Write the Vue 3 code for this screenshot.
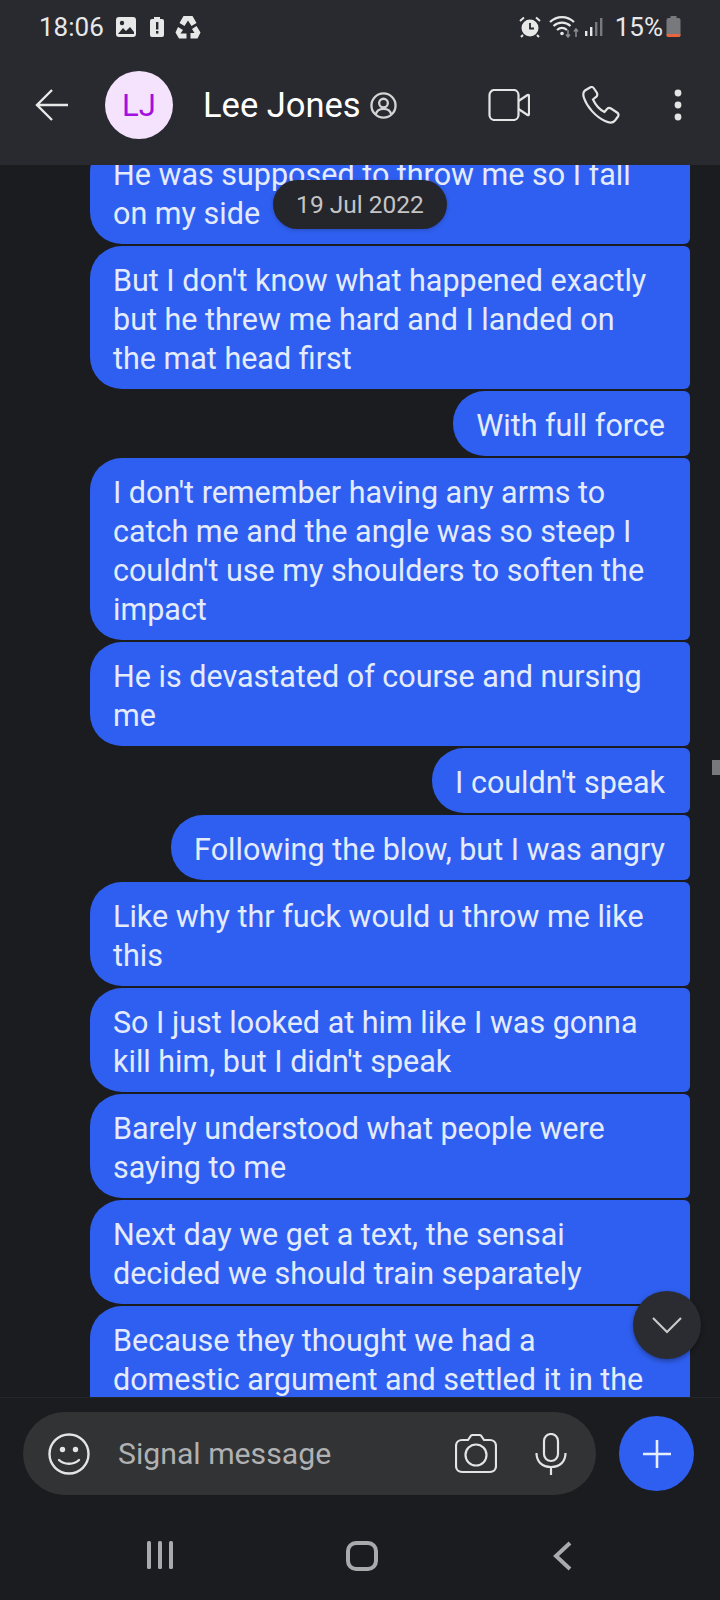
<script setup>
const messages = [
  'He was supposed to throw me so I fall on my side',
  "But I don't know what happened exactly but he threw me hard and I landed on the\u00a0mat head first",
  'With full force',
  "I don't remember having any arms to catch me and the angle was so steep I couldn't use my shoulders to soften the impact",
  'He is devastated of course and nursing me',
  "I couldn't speak",
  'Following the blow, but I was angry',
  'Like why thr fuck would u throw me like this',
  "So I just looked at him like I was gonna kill him, but I didn't speak",
  'Barely understood what people were saying to me',
  'Next day we get a text, the sensai decided we should train separately',
  'Because they thought we had a domestic argument and settled it in the mat'
]
</script>

<template>
  <div class="phone">
    <header class="top">
      <div class="status">
        <div class="status-left">
          <span class="clock">18:06</span>
          <svg class="ic-img" width="22" height="22" viewBox="0 0 22 22">
            <rect x="1" y="1" width="20" height="20" rx="3" fill="#e8e8e8" />
            <circle cx="7" cy="7" r="2.2" fill="#282a30" />
            <path d="M3 18l5-6 3 3 4-4 4 5v2H3z" fill="#282a30" />
          </svg>
          <svg class="ic-batt" width="16" height="22" viewBox="0 0 16 22">
            <path d="M5 1h6v2h2a2 2 0 0 1 2 2v14a2 2 0 0 1-2 2H3a2 2 0 0 1-2-2V5a2 2 0 0 1 2-2h2z" fill="#e8e8e8" />
            <rect x="7" y="6" width="2.4" height="7.5" fill="#282a30" />
            <rect x="7" y="15" width="2.4" height="2.6" fill="#282a30" />
          </svg>
          <svg class="ic-rec" width="26" height="24" viewBox="0 0 26 24" fill="#e8e8e8">
            <path d="M8.500 1h9l4 7-5 3-3.500-5.500-3.500 5.500-5-3z" />
            <path d="M21.500 11l4 6.500-3 6h-7v-5.500h4l-2.500-4z" />
            <path d="M3 12l5 3-2.500 3.500h6v5H4l-3.500-6z" />
          </svg>
        </div>
        <div class="status-right">
          <svg width="22" height="22" viewBox="0 0 22 22">
            <circle cx="11" cy="12" r="8.500" fill="#e8e8e8" />
            <path d="M11 7v5.500h4" fill="none" stroke="#282a30" stroke-width="1.800" />
            <path d="M1 5l4-3.500M21 5l-4-3.500M4 19l-2 2M18 19l2 2" stroke="#e8e8e8" stroke-width="2" />
          </svg>
          <svg class="ic-wifi" width="30" height="22" viewBox="0 0 30 22" fill="none">
            <path d="M1 6c7-6.500 17-6.500 24 0M4.500 10c5-4.500 12-4.500 17 0M8 14c3-2.500 7-2.500 10 0" stroke="#e8e8e8" stroke-width="2.200" />
            <circle cx="13" cy="17.500" r="1.800" fill="#e8e8e8" />
            <path d="M19 14v7M17 18.500l2 2.500 2-2.500" stroke="#8b8d91" stroke-width="1.500" />
            <path d="M27 21v-8M25 15.500l2-2.500 2 2.500" stroke="#8b8d91" stroke-width="1.500" />
          </svg>
          <svg class="ic-signal" width="20" height="20" viewBox="0 0 20 20">
            <rect x="1" y="14" width="2.400" height="5" fill="#e8e8e8" />
            <rect x="6" y="10" width="2.400" height="9" fill="#e8e8e8" />
            <rect x="11" y="5" width="2.400" height="14" fill="#77797d" />
            <rect x="16" y="1" width="2.400" height="18" fill="#77797d" />
          </svg>
          <span class="pct">15%</span>
          <svg class="ic-level" width="15" height="22" viewBox="0 0 15 22">
            <path d="M4.500 0h6v2h2a2 2 0 0 1 2 2v15a2 2 0 0 1-2 2h-10a2 2 0 0 1-2-2V4a2 2 0 0 1 2-2h2z" fill="#77797d" />
            <path d="M.5 18h14v1a2 2 0 0 1-2 2h-10a2 2 0 0 1-2-2z" fill="#e8653f" />
          </svg>
        </div>
      </div>
      <div class="toolbar">
        <svg class="back" width="34" height="34" viewBox="0 0 34 34" fill="none" stroke="#e8e8e8" stroke-width="2.400">
          <path d="M33 17H3M17 2L2 17l15 15" />
        </svg>
        <div class="avatar">LJ</div>
        <div class="name">Lee Jones</div>
        <svg class="ic-about" width="27" height="27" viewBox="0 0 28 28" fill="none" stroke="#d4d4d4" stroke-width="2.400">
          <circle cx="14" cy="14" r="12.500" />
          <circle cx="14" cy="11.500" r="4.500" />
          <path d="M6 23c1-3.500 4-5.500 8-5.500s7 2 8 5.500" />
        </svg>
        <svg class="ic-video" width="42" height="32" viewBox="0 0 42 32" fill="none" stroke="#e4e4e4" stroke-width="2.200">
          <rect x="1.500" y="1" width="29" height="30" rx="5" />
          <path d="M30.500 12l9-6c1-.5 1.500 0 1.500 1v18c0 1-.5 1.500-1.500 1l-9-6" />
        </svg>
        <svg class="ic-phone" width="38" height="38" viewBox="0 0 38 38" fill="none" stroke="#e4e4e4" stroke-width="2.200">
          <path d="M8 1.500L3 4.500C1 6 1 9 2 12c3 9 12 19 21 23 4 2 8 2 10-.5l3-4c1-1.500.5-3-1-4l-6-4c-1.500-1-3-.5-4 .5l-2.500 3c-5-2.500-9-7-11.500-12.500l3-2.500c1.500-1 1.500-2.500 1-4L12 2.500C11 1 9.500.5 8 1.500z" />
        </svg>
        <svg class="ic-more" width="8" height="32" viewBox="0 0 8 32" fill="#e4e4e4">
          <circle cx="4" cy="4" r="3.400" />
          <circle cx="4" cy="16" r="3.400" />
          <circle cx="4" cy="28" r="3.400" />
        </svg>
      </div>
    </header>

    <main class="chat">
      <div class="list">
        <div v-for="(m, i) in messages" :key="i" class="bubble">{{ m }}</div>
      </div>
      <div class="date">19 Jul 2022</div>
      <div class="scroll-tick"></div>
      <button class="down">
        <svg width="32" height="20" viewBox="0 0 32 20" fill="none" stroke="#c9c9c9" stroke-width="2.200">
          <path d="M2 3l14 14L30 3" />
        </svg>
      </button>
    </main>

    <footer class="composer">
      <div class="field">
        <svg class="ic-smile" width="42" height="42" viewBox="0 0 42 42" fill="none" stroke="#e4e4e4" stroke-width="2.400">
          <circle cx="21" cy="21" r="19.500" />
          <path d="M11 27c5 5 15 5 20 0" stroke-linecap="round" />
          <circle cx="14.500" cy="16.500" r="2.700" fill="#e4e4e4" stroke="none" />
          <circle cx="27.500" cy="16.500" r="2.700" fill="#e4e4e4" stroke="none" />
        </svg>
        <span class="placeholder">Signal message</span>
        <svg class="ic-cam" width="42" height="40" viewBox="0 0 42 40" fill="none" stroke="#e4e4e4" stroke-width="2.200">
          <path d="M7 6h6l2-3c.5-1 1.500-2 3-2h6c1.500 0 2.500 1 3 2l2 3h6c3 0 6 2 6 6v20c0 4-3 6-6 6H7c-3 0-6-2-6-6V12c0-4 3-6 6-6z" />
          <circle cx="21" cy="21" r="10.500" />
        </svg>
        <svg class="ic-mic" width="32" height="42" viewBox="0 0 32 42" fill="none" stroke="#e4e4e4" stroke-width="2.200">
          <rect x="9" y="1" width="14" height="27" rx="7" />
          <path d="M1.500 20c0 9 6 14 14.500 14s14.500-5 14.500-14M16 34v8" />
        </svg>
      </div>
      <button class="plus">
        <svg width="30" height="30" viewBox="0 0 30 30" stroke="#e6edff" stroke-width="2.600">
          <path d="M15 1v28M1 15h28" />
        </svg>
      </button>
    </footer>

    <nav class="nav">
      <svg width="28" height="28" viewBox="0 0 28 28" fill="#a9aaac">
        <rect x="1" y="0" width="4" height="28" rx="1.500" />
        <rect x="12" y="0" width="4" height="28" rx="1.500" />
        <rect x="23" y="0" width="4" height="28" rx="1.500" />
      </svg>
      <svg width="32" height="30" viewBox="0 0 32 30" fill="none" stroke="#a9aaac" stroke-width="4">
        <rect x="2" y="2" width="28" height="26" rx="8" />
      </svg>
      <svg width="20" height="30" viewBox="0 0 20 30" fill="none" stroke="#a9aaac" stroke-width="4">
        <path d="M17 2L3 15l14 13" />
      </svg>
    </nav>
  </div>
</template>

<style scoped>
.phone {
  width: 720px;
  height: 1600px;
  display: flex;
  flex-direction: column;
  background: #1b1c1f;
  font-family: Roboto, "Noto Sans", sans-serif;
  overflow: hidden;
}

.top {
  height: 165px;
  flex: none;
  background: #282a30;
  color: #e8e8e8;
}

.status {
  height: 54px;
  padding: 0 39px 0 39px;
  display: flex;
  justify-content: space-between;
  align-items: center;
  box-sizing: border-box;
}

.status-left,
.status-right {
  display: flex;
  align-items: center;
}

.clock,
.pct {
  font-size: 26px;
}

.clock {
  margin-right: 11px;
}

.ic-batt {
  margin: 0 10px 0 12px;
}

.ic-wifi {
  margin-left: 8px;
}

.ic-signal {
  margin-left: 5px;
}

.pct {
  margin-left: 11px;
}

.ic-level {
  margin-left: 3px;
}

.toolbar {
  height: 102px;
  display: flex;
  align-items: center;
  padding-left: 35px;
}

.avatar {
  width: 68px;
  height: 68px;
  margin-left: 36px;
  border-radius: 50%;
  background: #f5e3fe;
  color: #a30fdc;
  font-size: 31px;
  display: flex;
  align-items: center;
  justify-content: center;
}

.name {
  margin-left: 30px;
  font-size: 34.5px;
  color: #fff;
}

.ic-about {
  margin-left: 9px;
}

.ic-video {
  margin-left: 91px;
}

.ic-phone {
  margin-left: 52px;
}

.ic-more {
  margin-left: 54px;
}

.chat {
  position: relative;
  flex: 1;
  min-height: 0;
  overflow: hidden;
}

.list {
  display: flex;
  flex-direction: column;
  align-items: flex-end;
  gap: 2px;
  margin-top: -25px;
  padding-right: 30px;
}

.bubble {
  max-width: 600px;
  box-sizing: border-box;
  padding: 15px 25px 11px 23px;
  background: #2f5ff0;
  color: #e4ebfd;
  font-size: 30.5px;
  line-height: 39px;
  border-radius: 32px 6px 6px 32px;
}

.date {
  position: absolute;
  left: 273px;
  top: 15px;
  height: 49px;
  width: 174px;
  border-radius: 25px;
  background: #25262b;
  color: #c4c4c6;
  font-size: 24.5px;
  display: flex;
  align-items: center;
  justify-content: center;
  box-shadow: 0 1px 4px rgba(0, 0, 0, 0.2);
}

.scroll-tick {
  position: absolute;
  right: 0;
  top: 595px;
  width: 8px;
  height: 15px;
  background: #77797d;
}

.down {
  position: absolute;
  left: 633px;
  top: 1126px;
  width: 68px;
  height: 68px;
  padding: 0;
  border: none;
  border-radius: 50%;
  background: #2a2c32;
  box-shadow: 0 2px 5px rgba(0, 0, 0, 0.35);
  display: flex;
  align-items: center;
  justify-content: center;
}

.composer {
  flex: none;
  height: 115px;
  box-sizing: border-box;
  padding: 14px 0 0 23px;
  display: flex;
  align-items: flex-start;
  border-top: 1px solid #25262a;
}

.field {
  width: 573px;
  height: 83px;
  border-radius: 42px;
  background: #323335;
  display: flex;
  align-items: center;
  padding: 0 29px 0 25px;
  box-sizing: border-box;
}

.placeholder {
  margin-left: 28px;
  font-size: 30.2px;
  color: #b0b1b3;
}

.ic-cam {
  margin-left: auto;
}

.ic-mic {
  margin-left: 38px;
}

.plus {
  width: 75px;
  height: 75px;
  margin: 4px 0 0 23px;
  padding: 0;
  border: none;
  border-radius: 50%;
  background: #2f5ff0;
  display: flex;
  align-items: center;
  justify-content: center;
}

.nav {
  flex: none;
  height: 88px;
  box-sizing: border-box;
  display: flex;
  align-items: flex-start;
  padding: 29px 0 0 146px;
}

.nav svg:nth-child(2) {
  margin-left: 172px;
}

.nav svg:nth-child(3) {
  margin-left: 175px;
}
</style>

<style>
html,
body {
  background: #1b1c1f;
}
</style>
